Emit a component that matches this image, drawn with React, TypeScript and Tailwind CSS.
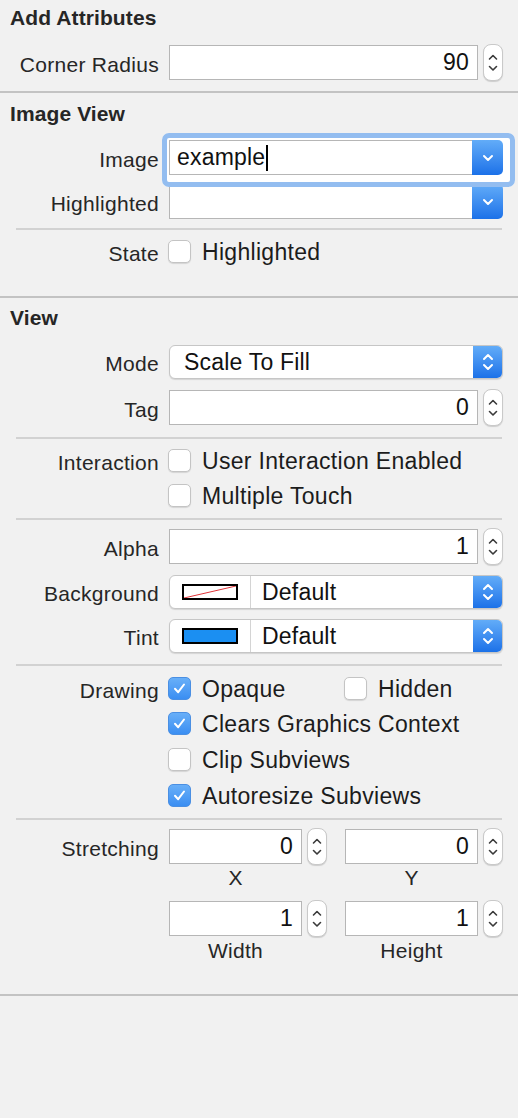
import React from "react";

const Label = ({ children }: { children?: React.ReactNode }) => (
  <div className="w-[159px] shrink-0 pt-[3px] text-right text-[21px] leading-none tracking-[0.3px] text-[#262626] whitespace-nowrap">
    {children}
  </div>
);

const Stepper = () => (
  <div className="ml-[5px] w-[20px] h-[37px] shrink-0 rounded-[8px] bg-white border border-[#c9c9c9] shadow-[0_1px_1px_rgba(0,0,0,0.15)] flex items-center justify-center">
    <svg width="18" height="35" viewBox="0 0 18 35" fill="none">
      <path d="M5.5 14 L9 10.5 L12.5 14" stroke="#3a3a3a" strokeWidth="1.6" strokeLinecap="round" strokeLinejoin="round" />
      <path d="M5.5 21.5 L9 25 L12.5 21.5" stroke="#3a3a3a" strokeWidth="1.6" strokeLinecap="round" strokeLinejoin="round" />
    </svg>
  </div>
);

const PopupArrows = () => (
  <div className="w-[29px] h-full shrink-0 bg-gradient-to-b from-[#62acf8] to-[#1b71e8] flex items-center justify-center">
    <svg width="14" height="22" viewBox="0 0 14 22" fill="none">
      <path d="M3 8 L7 4 L11 8" stroke="white" strokeWidth="2" strokeLinecap="round" strokeLinejoin="round" />
      <path d="M3 14 L7 18 L11 14" stroke="white" strokeWidth="2" strokeLinecap="round" strokeLinejoin="round" />
    </svg>
  </div>
);

const ComboArrow = () => (
  <div className="w-[31px] h-full shrink-0 rounded-r-[5px] bg-gradient-to-b from-[#62acf8] to-[#1b71e8] flex items-center justify-center">
    <svg width="14" height="10" viewBox="0 0 14 10" fill="none">
      <path d="M3 3 L7 7 L11 3" stroke="white" strokeWidth="2" strokeLinecap="round" strokeLinejoin="round" />
    </svg>
  </div>
);

const Checkbox = ({ checked }: { checked?: boolean }) =>
  checked ? (
    <div className="w-[23px] h-[23px] shrink-0 rounded-[5px] bg-gradient-to-b from-[#68aff8] to-[#3a8ef2] border border-[#4a8fe3] flex items-center justify-center">
      <svg width="17" height="17" viewBox="0 0 17 17" fill="none">
        <path d="M4 8.8 L7.2 12.2 L13 4.5" stroke="white" strokeWidth="2" strokeLinecap="round" strokeLinejoin="round" />
      </svg>
    </div>
  ) : (
    <div className="w-[23px] h-[23px] shrink-0 rounded-[5px] bg-white border border-[#c4c4c4] shadow-[0_1px_1px_rgba(0,0,0,0.12)]" />
  );

const CheckItem = ({ checked, text }: { checked?: boolean; text: string }) => (
  <div className="flex items-center">
    <Checkbox checked={checked} />
    <span className="ml-[11px] pt-[1px] text-[23px] leading-none tracking-[0.3px] text-[#1c1c1c] whitespace-nowrap">{text}</span>
  </div>
);

const Header = ({ text, h }: { text: string; h: string }) => (
  <div className={`flex items-center pl-[10px] ${h}`}>
    <span className="text-[21px] font-bold leading-none tracking-[0.1px] text-[#262626]">{text}</span>
  </div>
);

const FullDivider = ({ mt }: { mt: string }) => <div className={`h-[2px] bg-[#c3c3c3] ${mt}`} />;
const InsetDivider = ({ mt }: { mt: string }) => (
  <div className={`h-[2px] mx-[16px] bg-[#d2d2d2] ${mt}`} />
);

const valueCls =
  "bg-white border border-[#b6b6b6] flex items-center justify-end pr-[8px] text-[23px] leading-none tracking-[0.2px] text-[#111]";

export default function App() {
  return (
    <div className="w-[518px] h-[1118px] bg-[#f1f1f1] font-['Liberation_Sans',Arial,sans-serif] overflow-hidden">
      {/* Add Attributes */}
      <Header text="Add Attributes" h="h-[35px]" />
      <div className="mt-[10px] flex items-center h-[35px]">
        <Label>Corner Radius</Label>
        <div className={`ml-[10px] w-[309px] h-[35px] ${valueCls}`}>90</div>
        <Stepper />
      </div>
      <FullDivider mt="mt-[11px]" />

      {/* Image View */}
      <Header text="Image View" h="h-[40px]" />
      <div className="mt-[7px] flex items-center h-[35px]">
        <Label>Image</Label>
        <div className="ml-[10px] relative w-[334px] h-[35px]">
          <div className="absolute left-[-7px] top-[-7px] w-[353px] h-[54px] rounded-[7px] bg-white" />
          <div className="relative z-10 flex w-full h-full">
            <div className="flex-1 bg-white border border-r-0 border-[#b6b6b6] flex items-center pl-[7px] text-[23px] leading-none tracking-[0.2px] text-[#111]">
              <span>example</span>
              <span className="ml-[1px] w-[2px] h-[26px] bg-black" />
            </div>
            <ComboArrow />
          </div>
          <div className="absolute z-30 left-[-7px] top-[-7px] w-[353px] h-[54px] rounded-[7px] border-[5px] border-[#93bdf0] pointer-events-none" />
        </div>
      </div>
      <div className="mt-[9px] flex items-center h-[35px]">
        <Label>Highlighted</Label>
        <div className="ml-[10px] relative z-20 flex w-[334px] h-[35px]">
          <div className="flex-1 bg-white border border-r-0 border-[#b6b6b6]" />
          <ComboArrow />
        </div>
      </div>
      <InsetDivider mt="mt-[9px]" />
      <div className="mt-[10px] flex items-center h-[23px]">
        <Label>State</Label>
        <div className="ml-[9px]">
          <CheckItem text="Highlighted" />
        </div>
      </div>
      <FullDivider mt="mt-[33px]" />

      {/* View */}
      <Header text="View" h="h-[38px]" />
      <div className="mt-[9px] flex items-center h-[34px]">
        <Label>Mode</Label>
        <div className="ml-[10px] w-[334px] h-[34px] rounded-[6px] bg-white border border-[#c6c6c6] shadow-[0_1px_1px_rgba(0,0,0,0.12)] flex overflow-hidden">
          <div className="flex-1 flex items-center pl-[14px] text-[23px] leading-none tracking-[0.2px] text-[#111]">Scale To Fill</div>
          <PopupArrows />
        </div>
      </div>
      <div className="mt-[11px] flex items-center h-[35px]">
        <Label>Tag</Label>
        <div className={`ml-[10px] w-[309px] h-[35px] ${valueCls}`}>0</div>
        <Stepper />
      </div>
      <InsetDivider mt="mt-[12px]" />
      <div className="mt-[10px] flex items-center h-[23px]">
        <Label>Interaction</Label>
        <div className="ml-[9px]">
          <CheckItem text="User Interaction Enabled" />
        </div>
      </div>
      <div className="mt-[12px] flex items-center h-[23px]">
        <Label />
        <div className="ml-[9px]">
          <CheckItem text="Multiple Touch" />
        </div>
      </div>
      <InsetDivider mt="mt-[11px]" />
      <div className="mt-[9px] flex items-center h-[35px]">
        <Label>Alpha</Label>
        <div className={`ml-[10px] w-[309px] h-[35px] ${valueCls}`}>1</div>
        <Stepper />
      </div>
      <div className="mt-[11px] flex items-center h-[34px]">
        <Label>Background</Label>
        <div className="ml-[10px] w-[334px] h-[34px] rounded-[6px] bg-white border border-[#c6c6c6] shadow-[0_1px_1px_rgba(0,0,0,0.12)] flex overflow-hidden">
          <div className="w-[81px] shrink-0 border-r border-[#d4d4d4] flex items-center justify-center">
            <div className="w-[56px] h-[16px] border-2 border-black bg-white">
              <svg width="52" height="12" viewBox="0 0 52 12" className="block">
                <line x1="0" y1="12" x2="52" y2="0" stroke="#e0353a" strokeWidth="1" />
              </svg>
            </div>
          </div>
          <div className="flex-1 flex items-center pl-[11px] text-[23px] leading-none tracking-[0.2px] text-[#111]">Default</div>
          <PopupArrows />
        </div>
      </div>
      <div className="mt-[10px] flex items-center h-[34px]">
        <Label>Tint</Label>
        <div className="ml-[10px] w-[334px] h-[34px] rounded-[6px] bg-white border border-[#c6c6c6] shadow-[0_1px_1px_rgba(0,0,0,0.12)] flex overflow-hidden">
          <div className="w-[81px] shrink-0 border-r border-[#d4d4d4] flex items-center justify-center">
            <div className="w-[56px] h-[16px] border-2 border-black bg-[#1b8ff2]" />
          </div>
          <div className="flex-1 flex items-center pl-[11px] text-[23px] leading-none tracking-[0.2px] text-[#111]">Default</div>
          <PopupArrows />
        </div>
      </div>
      <InsetDivider mt="mt-[11px]" />
      <div className="mt-[11px] flex items-center h-[23px]">
        <Label>Drawing</Label>
        <div className="ml-[9px] flex items-center">
          <div className="w-[176px]">
            <CheckItem checked text="Opaque" />
          </div>
          <CheckItem text="Hidden" />
        </div>
      </div>
      <div className="mt-[12px] flex items-center h-[23px]">
        <Label />
        <div className="ml-[9px]">
          <CheckItem checked text="Clears Graphics Context" />
        </div>
      </div>
      <div className="mt-[13px] flex items-center h-[23px]">
        <Label />
        <div className="ml-[9px]">
          <CheckItem text="Clip Subviews" />
        </div>
      </div>
      <div className="mt-[13px] flex items-center h-[23px]">
        <Label />
        <div className="ml-[9px]">
          <CheckItem checked text="Autoresize Subviews" />
        </div>
      </div>
      <InsetDivider mt="mt-[11px]" />

      {/* Stretching */}
      <div className="mt-[9px] flex items-center h-[35px]">
        <Label>Stretching</Label>
        <div className={`ml-[10px] w-[133px] h-[35px] ${valueCls}`}>0</div>
        <Stepper />
        <div className={`ml-[18px] w-[133px] h-[35px] ${valueCls}`}>0</div>
        <Stepper />
      </div>
      <div className="flex items-center h-[24px] pt-[2px]">
        <div className="w-[169px] shrink-0" />
        <div className="w-[133px] text-center text-[21px] leading-none text-[#262626]">X</div>
        <div className="w-[43px] shrink-0" />
        <div className="w-[133px] text-center text-[21px] leading-none text-[#262626]">Y</div>
      </div>
      <div className="mt-[13px] flex items-center h-[35px]">
        <Label />
        <div className={`ml-[10px] w-[133px] h-[35px] ${valueCls}`}>1</div>
        <Stepper />
        <div className={`ml-[18px] w-[133px] h-[35px] ${valueCls}`}>1</div>
        <Stepper />
      </div>
      <div className="flex items-center h-[26px] pt-[2px]">
        <div className="w-[169px] shrink-0" />
        <div className="w-[133px] text-center text-[21px] leading-none tracking-[0.3px] text-[#262626]">Width</div>
        <div className="w-[43px] shrink-0" />
        <div className="w-[133px] text-center text-[21px] leading-none tracking-[0.3px] text-[#262626]">Height</div>
      </div>
      <FullDivider mt="mt-[32px]" />
    </div>
  );
}
